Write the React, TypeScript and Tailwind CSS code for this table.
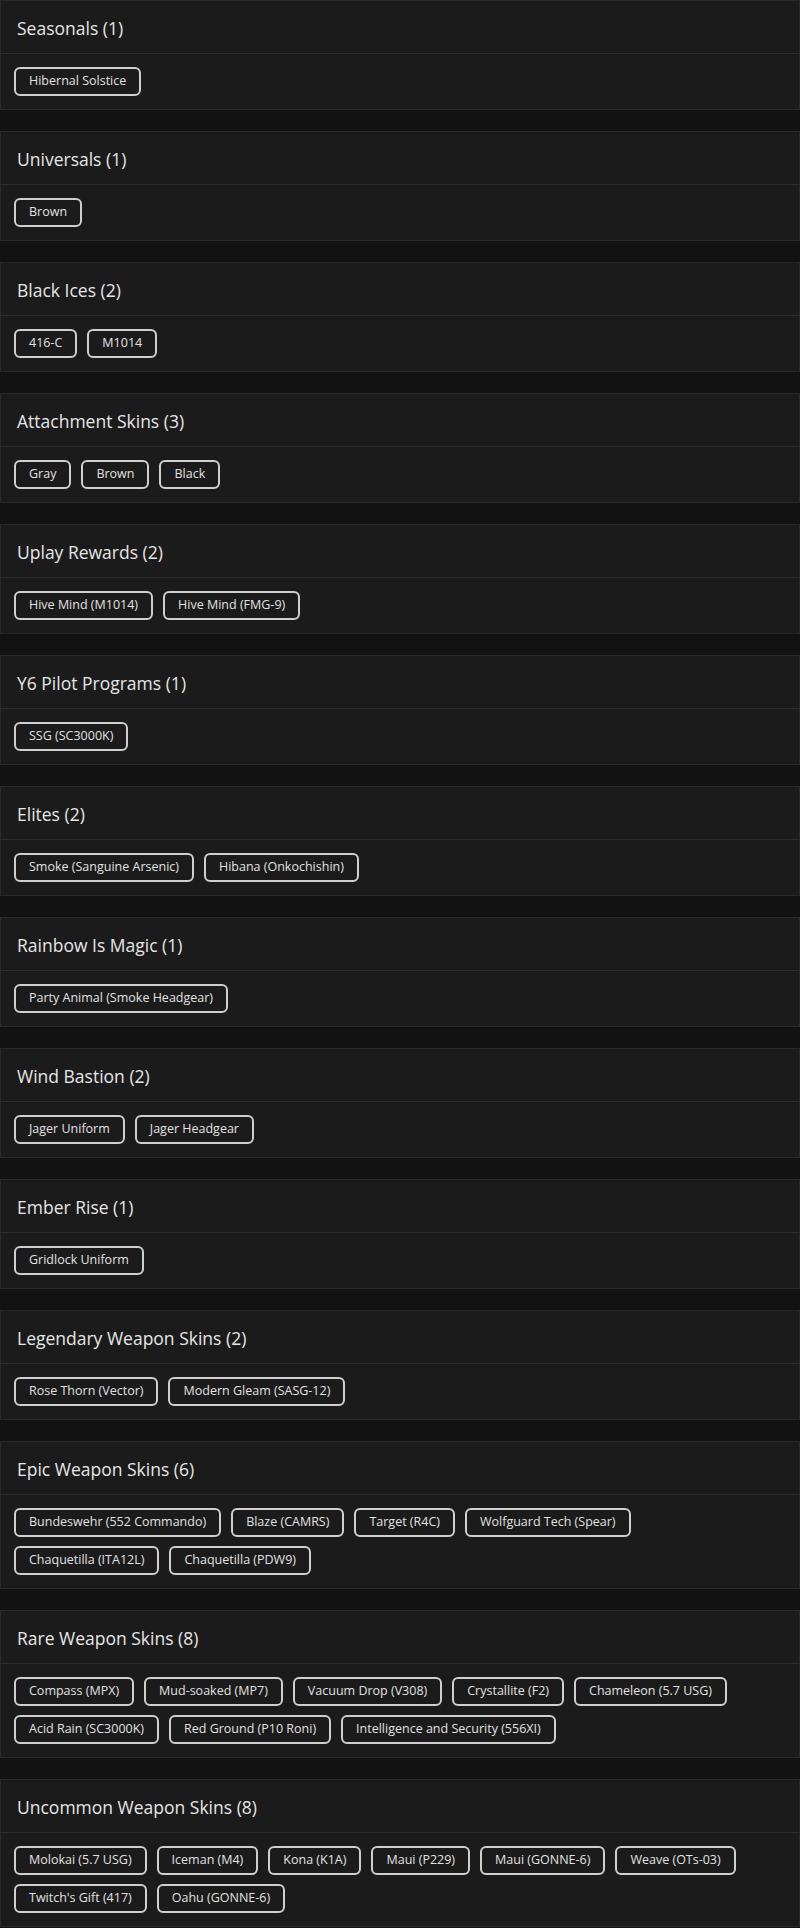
import React from 'react';

type Group = { title: string; items: string[] };

const GROUPS: Group[] = [
  { title: 'Seasonals', items: ['Hibernal Solstice'] },
  { title: 'Universals', items: ['Brown'] },
  { title: 'Black Ices', items: ['416-C', 'M1014'] },
  { title: 'Attachment Skins', items: ['Gray', 'Brown', 'Black'] },
  { title: 'Uplay Rewards', items: ['Hive Mind (M1014)', 'Hive Mind (FMG-9)'] },
  { title: 'Y6 Pilot Programs', items: ['SSG (SC3000K)'] },
  { title: 'Elites', items: ['Smoke (Sanguine Arsenic)', 'Hibana (Onkochishin)'] },
  { title: 'Rainbow Is Magic', items: ['Party Animal (Smoke Headgear)'] },
  { title: 'Wind Bastion', items: ['Jager Uniform', 'Jager Headgear'] },
  { title: 'Ember Rise', items: ['Gridlock Uniform'] },
  { title: 'Legendary Weapon Skins', items: ['Rose Thorn (Vector)', 'Modern Gleam (SASG-12)'] },
  {
    title: 'Epic Weapon Skins',
    items: [
      'Bundeswehr (552 Commando)',
      'Blaze (CAMRS)',
      'Target (R4C)',
      'Wolfguard Tech (Spear)',
      'Chaquetilla (ITA12L)',
      'Chaquetilla (PDW9)',
    ],
  },
  {
    title: 'Rare Weapon Skins',
    items: [
      'Compass (MPX)',
      'Mud-soaked (MP7)',
      'Vacuum Drop (V308)',
      'Crystallite (F2)',
      'Chameleon (5.7 USG)',
      'Acid Rain (SC3000K)',
      'Red Ground (P10 Roni)',
      'Intelligence and Security (556XI)',
    ],
  },
  {
    title: 'Uncommon Weapon Skins',
    items: [
      'Molokai (5.7 USG)',
      'Iceman (M4)',
      'Kona (K1A)',
      'Maui (P229)',
      'Maui (GONNE-6)',
      'Weave (OTs-03)',
      "Twitch's Gift (417)",
      'Oahu (GONNE-6)',
    ],
  },
];

const GroupCard: React.FC<{ group: Group }> = ({ group }) => (
  <section className="bg-[#1b1b1b] border border-[#2a2a2a]">
    <div className="h-[53px] flex items-center px-4 pt-[2px] border-b border-[#2c2c2c]">
      <h3 className="text-[17.5px] font-medium text-[#e6e6e6]">
        {group.title} ({group.items.length})
      </h3>
    </div>
    <div className="flex flex-wrap gap-x-[10px] gap-y-[9px] pl-[13px] pr-[32px] pt-[13px] pb-[13px]">
      {group.items.map((item) => (
        <span
          key={item}
          className="h-[29px] inline-flex items-center px-[13px] rounded-md border-2 border-[#cfcfcf] text-[12.5px] text-[#e2e2e2]"
        >
          {item}
        </span>
      ))}
    </div>
  </section>
);

export default function App() {
  return (
    <div
      className="min-h-screen bg-[#121212] flex flex-col gap-[21px]"
      style={{ fontFamily: '"Open Sans", "Noto Sans", sans-serif' }}
    >
      {GROUPS.map((g) => (
        <GroupCard key={g.title} group={g} />
      ))}
    </div>
  );
}
